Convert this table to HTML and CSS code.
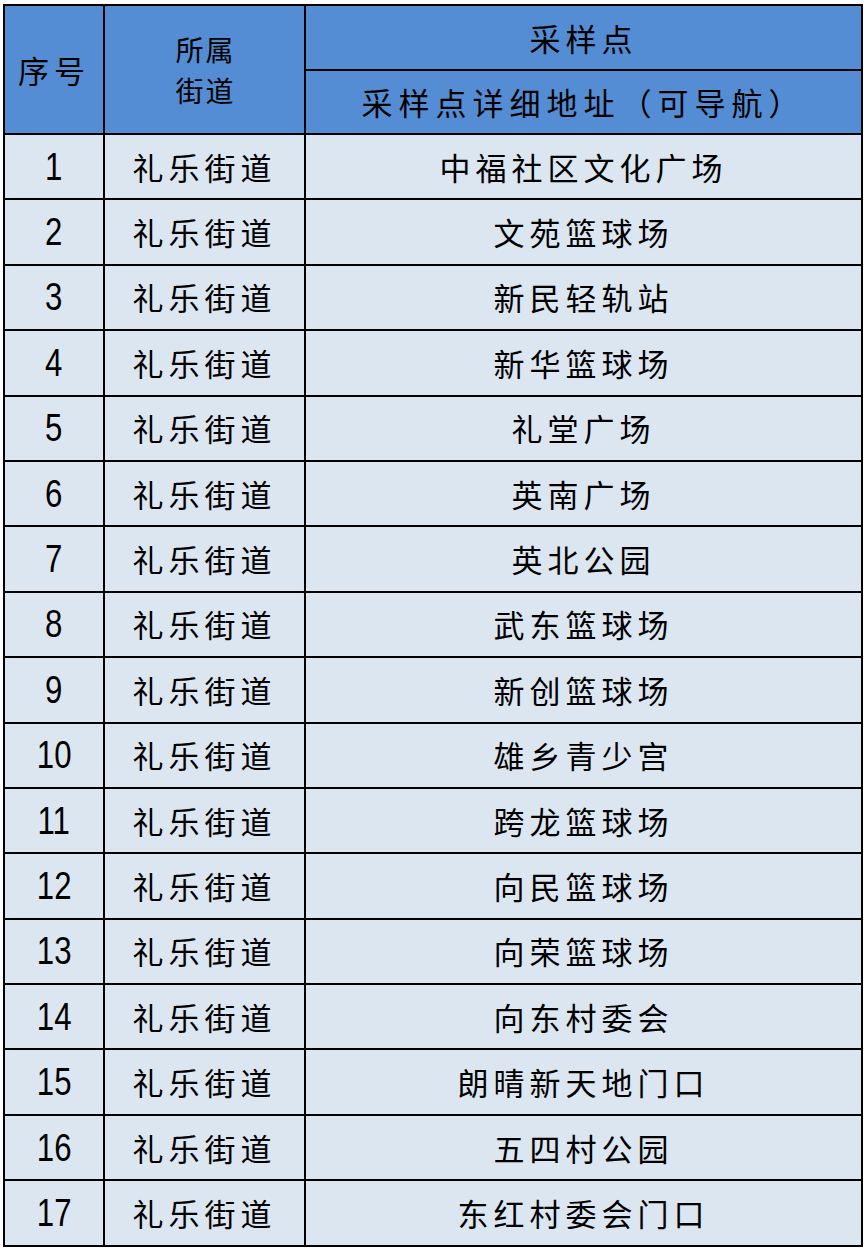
FILE: index.html
```html
<!DOCTYPE html>
<html lang="zh">
<head>
<meta charset="utf-8">
<link rel="stylesheet" href="styles.css">
</head>
<body>
<table class="sheet">
  <colgroup><col class="c-no"><col class="c-street"><col class="c-site"></colgroup>
  <thead>
    <tr class="h1">
      <th rowspan="2" class="zh">序号</th>
      <th rowspan="2" class="zh two"><div class="ln">所属</div><div class="ln">街道</div></th>
      <th class="zh">采样点</th>
    </tr>
    <tr class="h2">
      <th class="zh wide">采样点详细地址（可导航）</th>
    </tr>
  </thead>
  <tbody>
    <tr><td class="num"><span>1</span></td><td class="zh">礼乐街道</td><td class="zh">中福社区文化广场</td></tr>
    <tr><td class="num"><span>2</span></td><td class="zh">礼乐街道</td><td class="zh">文苑篮球场</td></tr>
    <tr><td class="num"><span>3</span></td><td class="zh">礼乐街道</td><td class="zh">新民轻轨站</td></tr>
    <tr><td class="num"><span>4</span></td><td class="zh">礼乐街道</td><td class="zh">新华篮球场</td></tr>
    <tr><td class="num"><span>5</span></td><td class="zh">礼乐街道</td><td class="zh">礼堂广场</td></tr>
    <tr><td class="num"><span>6</span></td><td class="zh">礼乐街道</td><td class="zh">英南广场</td></tr>
    <tr><td class="num"><span>7</span></td><td class="zh">礼乐街道</td><td class="zh">英北公园</td></tr>
    <tr><td class="num"><span>8</span></td><td class="zh">礼乐街道</td><td class="zh">武东篮球场</td></tr>
    <tr><td class="num"><span>9</span></td><td class="zh">礼乐街道</td><td class="zh">新创篮球场</td></tr>
    <tr><td class="num"><span>10</span></td><td class="zh">礼乐街道</td><td class="zh">雄乡青少宫</td></tr>
    <tr><td class="num"><span>11</span></td><td class="zh">礼乐街道</td><td class="zh">跨龙篮球场</td></tr>
    <tr><td class="num"><span>12</span></td><td class="zh">礼乐街道</td><td class="zh">向民篮球场</td></tr>
    <tr><td class="num"><span>13</span></td><td class="zh">礼乐街道</td><td class="zh">向荣篮球场</td></tr>
    <tr><td class="num"><span>14</span></td><td class="zh">礼乐街道</td><td class="zh">向东村委会</td></tr>
    <tr><td class="num"><span>15</span></td><td class="zh">礼乐街道</td><td class="zh">朗晴新天地门口</td></tr>
    <tr><td class="num"><span>16</span></td><td class="zh">礼乐街道</td><td class="zh">五四村公园</td></tr>
    <tr><td class="num"><span>17</span></td><td class="zh">礼乐街道</td><td class="zh">东红村委会门口</td></tr>
  </tbody>
</table>
</body>
</html>
```

FILE: styles.css
```css
html, body {
  margin: 0;
  padding: 0;
  background: #ffffff;
}
body {
  padding: 4px 0 0 3px;
}
.sheet {
  border-collapse: collapse;
  width: 858px;
  table-layout: fixed;
  border: 2px solid #000;
  color: #000;
}
.c-no { width: 100px; }
.c-street { width: 201px; }
.c-site { width: 557px; }

.sheet th, .sheet td {
  border: 2px solid #000;
  padding: 0;
  text-align: center;
  vertical-align: middle;
  font-weight: normal;
}
.sheet thead th {
  background: #548dd4;
}
.sheet tbody td {
  background: #dce6f1;
}
.h1 { height: 65px; }
.h2 { height: 64px; }
.sheet tbody tr { height: 65.4px; }

.zh {
  font-family: "Noto Sans CJK SC", "Noto Sans CJK JP", sans-serif;
  font-size: 31px;
  letter-spacing: 5px;
  padding-left: 5px;
  line-height: 36px;
}
.sheet th.wide {
  letter-spacing: 6px;
  padding-left: 0;
}
.sheet th.two {
  letter-spacing: 2px;
  padding-left: 2px;
  font-size: 28px;
}
.ln {
  line-height: 41px;
}
.num {
  font-family: "Liberation Sans", Arial, sans-serif;
  font-size: 38px;
  line-height: 38px;
  padding-top: 3px;
}
.num span {
  display: inline-block;
  transform: scaleX(0.82);
}
```
